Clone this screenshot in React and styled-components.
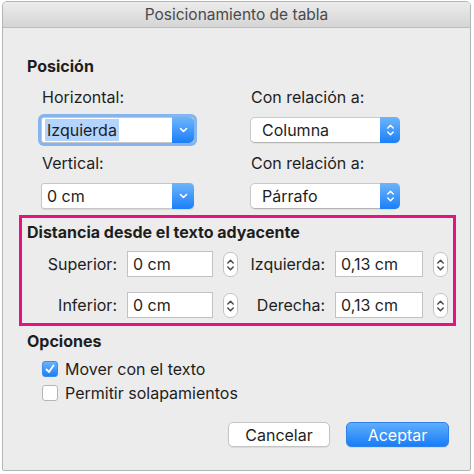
import { Fragment } from "react";
import styled, { createGlobalStyle } from "styled-components";

const GlobalStyle = createGlobalStyle`
    * { box-sizing: border-box; }
    html, body {
        margin: 0;
        padding: 0;
        background: #fff;
    }
    body {
        font-family: Inter, "Liberation Sans", sans-serif;
        -webkit-font-smoothing: antialiased;
    }
`

const Window = styled.div`
    margin: 1px 0 0 2px;
    width: 469px;
    height: 470px;
    background: #ececec;
    border: 1px solid #b4b4b4;
    border-radius: 5px 5px 2px 2px;
    display: flex;
    flex-direction: column;
    overflow: hidden;
    color: #1e1e1e;
    font-size: 16px;
`

const TitleBar = styled.div`
    height: 26px;
    flex-shrink: 0;
    background: linear-gradient(#ececec, #d5d5d5);
    border-bottom: 1px solid #bcbcbc;
    display: flex;
    align-items: center;
    justify-content: center;
    font-size: 15.5px;
    color: #4a4a4a;
`

const Content = styled.div`
    display: flex;
    flex-direction: column;
    padding: 0 14px 0 16px;
`

const Heading = styled.div`
    font-weight: 700;
    line-height: 20px;
    padding-left: ${p => p.$indent ?? 8}px;
    margin-top: ${p => p.$top ?? 0}px;
`

const PopupGrid = styled.div`
    display: grid;
    grid-template-columns: 153px 150px;
    grid-template-rows: 20px 26px 20px 26px;
    column-gap: 56px;
    row-gap: 10px;
    padding-left: 22px;
    margin-top: 11px;
`

const Label = styled.div`
    line-height: 20px;
    padding-left: 1px;
`

const ComboBox = styled.div`
    display: flex;
    height: 26px;
    background: #fff;
    border: 1px solid #c6c6c6;
    border-radius: 3px;
    box-shadow: ${p => p.$focused ? "0 0 0 3px #84b5ef" : "0 1px 1px rgba(0,0,0,0.08)"};
`

const ComboText = styled.div`
    flex: 1;
    display: flex;
    align-items: center;
    padding-left: 3px;
`

const Selected = styled.span`
    background: ${p => p.$on ? "#b3d4fc" : "transparent"};
    padding: 1px 2px;
    line-height: 20px;
`

const PopupButton = styled.div`
    display: flex;
    height: 26px;
    background: #fff;
    border: 1px solid #c9c9c9;
    border-bottom-color: #b3b3b3;
    border-radius: 5px;
    box-shadow: 0 1px 1px rgba(0,0,0,0.06);
`

const PopupText = styled.div`
    flex: 1;
    display: flex;
    align-items: center;
    padding-left: 11px;
`

const BlueCap = styled.div`
    width: ${p => p.$w}px;
    margin: -1px -1px -1px 0;
    display: flex;
    align-items: center;
    justify-content: center;
    background: linear-gradient(#6db5fb, #1b7ff8);
    border-radius: 0 5px 5px 0;
`

const DistanceBox = styled.div`
    margin-top: 6px;
    border: 3px solid #e3147f;
    padding: 4px 0 5px 5px;
`

const FieldGrid = styled.div`
    display: grid;
    grid-template-columns: 90px 86px 15px 77px 88px 15px;
    grid-auto-rows: 26px;
    column-gap: 10px;
    row-gap: 15px;
    margin-top: 9px;
`

const FieldLabel = styled.div`
    display: flex;
    align-items: center;
    justify-content: flex-end;
`

const TextField = styled.div`
    display: flex;
    align-items: center;
    background: #fff;
    border: 1px solid #c2c2c2;
    padding-left: 5px;
`

const StepperBox = styled.div`
    margin-top: 1px;
    height: 25px;
    background: #fff;
    border: 1px solid #c4c4c4;
    border-radius: 7px;
    display: flex;
    align-items: center;
    justify-content: center;
`

const CheckList = styled.div`
    display: flex;
    flex-direction: column;
    margin-top: 6px;
    padding-left: 23px;
`

const CheckRow = styled.label`
    display: flex;
    align-items: center;
    gap: 7px;
    height: 24px;
`

const Box = styled.span`
    width: 16px;
    height: 16px;
    border-radius: 3px;
    display: flex;
    align-items: center;
    justify-content: center;
    background: ${p => p.$checked ? "linear-gradient(#6ab3fb, #1c7ff8)" : "#fff"};
    border: 1px solid ${p => p.$checked ? "#3a8cf0" : "#b5b5b5"};
`

const ButtonRow = styled.div`
    display: flex;
    justify-content: flex-end;
    gap: 16px;
    margin-top: 17px;
    padding-right: 7px;
`

const Button = styled.div`
    width: ${p => p.$w}px;
    height: 25px;
    display: flex;
    align-items: center;
    justify-content: center;
    border-radius: 5px;
    background: ${p => p.$primary ? "linear-gradient(#5eaefc, #197df8)" : "#fff"};
    border: 1px solid ${p => p.$primary ? "#2f82ee" : "#c5c5c5"};
    color: ${p => p.$primary ? "#fff" : "#1e1e1e"};
    box-shadow: 0 1px 1px rgba(0,0,0,0.08);
`

const ChevronDown = () => (
    <svg width="9" height="6" viewBox="0 0 9 6">
        <path d="M1.5 1.5 L4.5 4.5 L7.5 1.5" fill="none" stroke="#fff" strokeWidth="1.6" strokeLinecap="round" strokeLinejoin="round" />
    </svg>
)

const UpDown = ({ color = "#fff", w = 9, h = 16 }) => (
    <svg width={w} height={h} viewBox="0 0 9 16">
        <path d="M1.8 6 L4.5 3.3 L7.2 6" fill="none" stroke={color} strokeWidth="1.5" strokeLinecap="round" strokeLinejoin="round" />
        <path d="M1.8 10 L4.5 12.7 L7.2 10" fill="none" stroke={color} strokeWidth="1.5" strokeLinecap="round" strokeLinejoin="round" />
    </svg>
)

const Check = () => (
    <svg width="12" height="12" viewBox="0 0 12 12">
        <path d="M2.5 6.5 L5 9 L9.5 2.5" fill="none" stroke="#fff" strokeWidth="1.8" strokeLinecap="round" strokeLinejoin="round" />
    </svg>
)

const Combo = ({ value, focused }) => (
    <ComboBox $focused={focused}>
        <ComboText><Selected $on={focused}>{value}</Selected></ComboText>
        <BlueCap $w={22}><ChevronDown /></BlueCap>
    </ComboBox>
)

const Popup = ({ value }) => (
    <PopupButton>
        <PopupText>{value}</PopupText>
        <BlueCap $w={20}><UpDown /></BlueCap>
    </PopupButton>
)

const Stepper = () => (
    <StepperBox><UpDown color="#4a4a4a" /></StepperBox>
)

const fields = [
    ["Superior:", "0 cm", "Izquierda:", "0,13 cm"],
    ["Inferior:", "0 cm", "Derecha:", "0,13 cm"],
]

export default function App() {
    return (
        <>
            <GlobalStyle />
            <Window>
                <TitleBar>Posicionamiento de tabla</TitleBar>
                <Content>
                    <Heading $top={28}>Posición</Heading>
                    <PopupGrid>
                        <Label>Horizontal:</Label>
                        <Label>Con relación a:</Label>
                        <Combo value="Izquierda" focused />
                        <Popup value="Columna" />
                        <Label>Vertical:</Label>
                        <Label>Con relación a:</Label>
                        <Combo value="0 cm" />
                        <Popup value="Párrafo" />
                    </PopupGrid>
                    <DistanceBox>
                        <Heading $indent={0}>Distancia desde el texto adyacente</Heading>
                        <FieldGrid>
                            {fields.map(row => (
                                <Fragment key={row[0]}>
                                    <FieldLabel>{row[0]}</FieldLabel>
                                    <TextField>{row[1]}</TextField>
                                    <Stepper />
                                    <FieldLabel>{row[2]}</FieldLabel>
                                    <TextField>{row[3]}</TextField>
                                    <Stepper />
                                </Fragment>
                            ))}
                        </FieldGrid>
                    </DistanceBox>
                    <Heading $top={5}>Opciones</Heading>
                    <CheckList>
                        <CheckRow><Box $checked><Check /></Box>Mover con el texto</CheckRow>
                        <CheckRow><Box />Permitir solapamientos</CheckRow>
                    </CheckList>
                    <ButtonRow>
                        <Button $w={102}>Cancelar</Button>
                        <Button $w={103} $primary>Aceptar</Button>
                    </ButtonRow>
                </Content>
            </Window>
        </>
    );
}
